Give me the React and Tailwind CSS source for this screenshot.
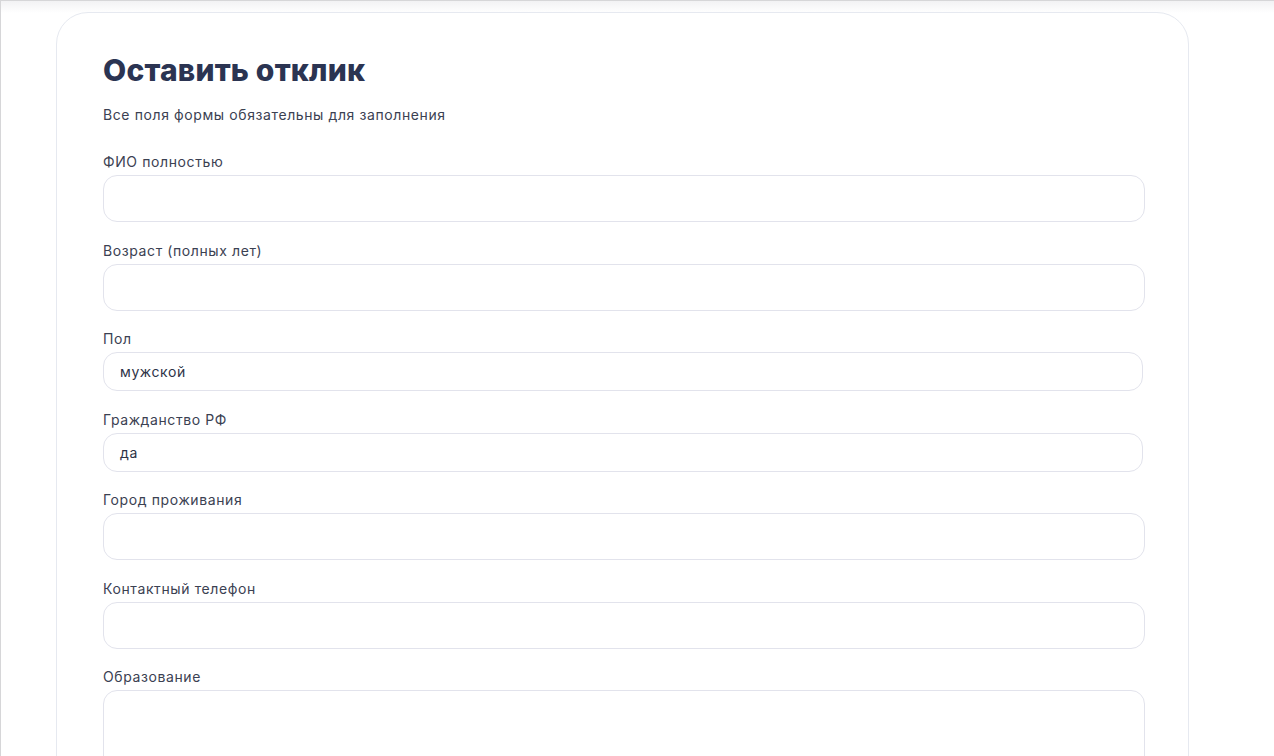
const fields = [
  { label: 'ФИО полностью', type: 'input' },
  { label: 'Возраст (полных лет)', type: 'input' },
  { label: 'Пол', type: 'select', value: 'мужской' },
  { label: 'Гражданство РФ', type: 'select', value: 'да' },
  { label: 'Город проживания', type: 'input' },
  { label: 'Контактный телефон', type: 'input' },
  { label: 'Образование', type: 'textarea' },
];

function Field({ field }) {
  return (
    <div className="flex flex-col">
      <label className="text-[14px] leading-[20px] tracking-[0.6px] text-[#3b4152] mb-[3px]">{field.label}</label>
      {field.type === 'input' && (
        <input
          type="text"
          className="h-[47px] w-full rounded-[14px] border border-[#e2e3ec] bg-white px-4 outline-none"
        />
      )}
      {field.type === 'select' && (
        <div className="h-[39px] w-[1040px] rounded-[14px] border border-[#e2e3ec] bg-white px-4 flex items-center text-[14px] tracking-[0.6px] text-[#2d3347]">
          {field.value}
        </div>
      )}
      {field.type === 'textarea' && (
        <textarea className="h-[120px] w-full resize-none rounded-[14px] border border-[#e2e3ec] bg-white px-4 py-3 outline-none" />
      )}
    </div>
  );
}

export default function App() {
  return (
    <div
      className="relative min-h-screen bg-white border-l border-t border-[#d6d6d8] overflow-hidden"
      style={{ fontFamily: 'Inter, "Noto Sans", sans-serif' }}
    >
      <div className="absolute inset-x-0 top-0 h-[12px] bg-gradient-to-b from-[#f2f2f4] to-white" />
      <div className="relative ml-[55px] mt-[11px] w-[1133px] rounded-[32px] border border-[#e6e9f0] bg-white pl-[46px] pr-[43px] pt-[39px] pb-10">
        <h1 className="text-[30px] leading-[36px] font-extrabold text-[#2b3452] tracking-[0.2px]">Оставить отклик</h1>
        <p className="mt-[17px] text-[14px] leading-[20px] tracking-[0.6px] text-[#3b4152]">Все поля формы обязательны для заполнения</p>
        <div className="mt-[27px] flex flex-col gap-[18.5px]">
          {fields.map((f) => (
            <Field key={f.label} field={f} />
          ))}
        </div>
      </div>
    </div>
  );
}
